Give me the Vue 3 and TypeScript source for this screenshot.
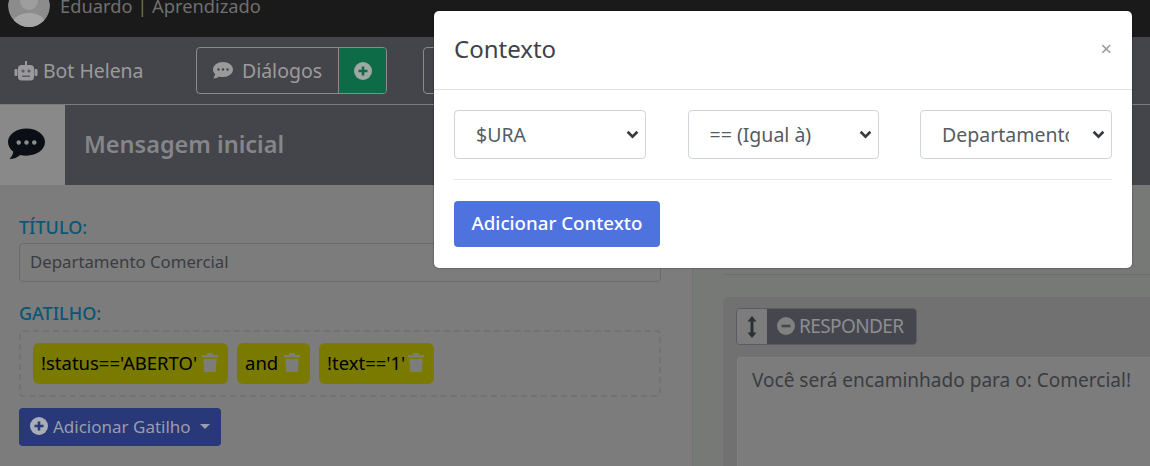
<template>
  <div class="page">
    <header class="topbar">
      <span class="avatar">
        <svg viewBox="0 0 42 42" width="42" height="42">
          <circle cx="21" cy="21" r="21" fill="#8c8c8c" />
          <circle cx="21" cy="16" r="9" fill="#9e9e9e" />
          <ellipse cx="21" cy="38" rx="16" ry="10" fill="#a6a6a6" />
        </svg>
      </span>
      <span class="user">Eduardo | Aprendizado</span>
    </header>

    <nav class="navbar">
      <span class="brand">
        <svg class="robot" viewBox="0 0 24 20" width="24" height="20">
          <rect x="0.5" y="8" width="3" height="7" rx="1" fill="#9a9a9a" />
          <rect x="20.5" y="8" width="3" height="7" rx="1" fill="#9a9a9a" />
          <rect x="4" y="4" width="16" height="15.5" rx="3.5" fill="#9a9a9a" />
          <rect x="11" y="0" width="2" height="4" fill="#9a9a9a" />
          <circle cx="9" cy="10" r="1.6" fill="#5a5b64" />
          <circle cx="15" cy="10" r="1.6" fill="#5a5b64" />
          <rect x="8" y="14.5" width="8" height="1.5" fill="#5a5b64" />
        </svg>
        Bot Helena
      </span>
      <div class="btn-group">
        <span class="btn-outline">
          <svg viewBox="0 0 20 17" width="20" height="17">
            <path d="M10 0C4.5 0 0 3.3 0 7.5c0 1.8.8 3.4 2.2 4.7C1.8 14 .6 15.6.4 16.4c2.4 0 4.3-1 5.5-2 1.2.4 2.6.6 4.1.6 5.5 0 10-3.4 10-7.5S15.5 0 10 0z" fill="#9a9a9a" />
            <circle cx="5.5" cy="7.5" r="1.2" fill="#44454b" />
            <circle cx="10" cy="7.5" r="1.2" fill="#44454b" />
            <circle cx="14.5" cy="7.5" r="1.2" fill="#44454b" />
          </svg>
          Diálogos
        </span>
        <span class="btn-add">
          <svg viewBox="0 0 18 18" width="18" height="18">
            <circle cx="9" cy="9" r="9" fill="#a0a8a3" />
            <path d="M9 4.5v9M4.5 9h9" stroke="#0e6b48" stroke-width="2.6" />
          </svg>
        </span>
      </div>
      <span class="btn-stub"></span>
    </nav>

    <section class="title-row">
      <div class="title-icon">
        <svg viewBox="0 0 38 32" width="37" height="32">
          <path d="M19 0C8.5 0 0 6.2 0 14c0 3.9 2.1 7.4 5.5 9.9C5 27 3 30 1.5 31.5c4.5 0 8.5-2 11-4.3 2 .5 4.2.8 6.5.8 10.5 0 19-6.2 19-14S29.5 0 19 0z" fill="#0b0e14" />
          <circle cx="11" cy="14.5" r="2.3" fill="#8d8d8d" />
          <circle cx="19" cy="14.5" r="2.3" fill="#8d8d8d" />
          <circle cx="27" cy="14.5" r="2.3" fill="#8d8d8d" />
        </svg>
      </div>
      <h2 class="title-bar">Mensagem inicial</h2>
    </section>

    <main class="content">
      <div class="left">
        <label class="label">TÍTULO:</label>
        <div class="input">Departamento Comercial</div>
        <label class="label gatilho">GATILHO:</label>
        <div class="triggers">
          <span v-for="t in triggers" :key="t.text" class="chip" :style="{ width: t.width + 'px' }">
            {{ t.text }}
            <svg viewBox="0 0 16 19" width="16" height="19">
              <path d="M5.5 0h5l1 2H16v2.4H0V2h4.5zM1.3 6h13.4l-1 13H2.3z" fill="#7c7c7c" />
            </svg>
          </span>
        </div>
        <span class="add-trigger">
          <svg viewBox="0 0 18 18" width="18" height="18">
            <circle cx="9" cy="9" r="9" fill="#a9adb8" />
            <path d="M9 4.5v9M4.5 9h9" stroke="#29397a" stroke-width="2.6" />
          </svg>
          Adicionar Gatilho
          <i class="caret"></i>
        </span>
      </div>

      <div class="right">
        <div class="right-line"></div>
        <div class="answer">
          <div class="answer-head">
            <span class="handle">
              <svg viewBox="0 0 10 22" width="10" height="22">
                <path d="M5 0l4.5 5.5H6.5v11h3L5 22 .5 16.5h3v-11h-3z" fill="#2d2f36" />
              </svg>
            </span>
            <span class="answer-tag">
              <svg viewBox="0 0 18 18" width="18" height="18">
                <circle cx="9" cy="9" r="9" fill="#7f8080" />
                <rect x="4.5" y="7.7" width="9" height="2.6" fill="#46474e" />
              </svg>
              RESPONDER
            </span>
          </div>
          <div class="answer-text">Você será encaminhado para o: Comercial!</div>
        </div>
      </div>
    </main>

    <div class="modal">
      <div class="modal-head">
        <h5>Contexto</h5>
        <span class="close">×</span>
      </div>
      <div class="modal-body">
        <div class="selects">
          <div v-for="s in selects" :key="s.label" class="select" :style="{ width: s.width + 'px' }">
            <span class="select-text">{{ s.label }}</span>
            <svg viewBox="0 0 12 8" width="13" height="9">
              <path d="M1.5 1.5L6 6l4.5-4.5" fill="none" stroke="#343a40" stroke-width="2.4" />
            </svg>
          </div>
        </div>
        <hr />
        <button class="primary" type="button">Adicionar Contexto</button>
      </div>
    </div>
  </div>
</template>

<script setup lang="ts">
const triggers: { text: string; width: number }[] = [
  { text: "!status=='ABERTO'", width: 195 },
  { text: 'and', width: 73 },
  { text: "!text=='1'", width: 115 },
]

const selects: { label: string; width: number }[] = [
  { label: '$URA', width: 192 },
  { label: '== (Igual à)', width: 191 },
  { label: 'Departamento', width: 192 },
]
</script>

<style>
html,
body {
  margin: 0;
  overflow: hidden;
}
</style>

<style scoped>
.page {
  position: relative;
  width: 1150px;
  height: 466px;
  overflow: hidden;
  background: #7c7c7c;
  font-family: "Noto Sans", "Open Sans", sans-serif;
  color: #3a3c42;
}

.topbar {
  height: 37px;
  background: #1a1a1a;
  display: flex;
  align-items: flex-end;
  gap: 10px;
  padding: 0 0 10px 8px;
  box-sizing: border-box;
  overflow: hidden;
}
.avatar {
  width: 42px;
  height: 42px;
  flex: none;
  border-radius: 50%;
  overflow: hidden;
}
.avatar svg {
  display: block;
}
.user {
  color: #6f6f6f;
  font-size: 18.3px;
  line-height: 30px;
  margin-bottom: 6px;
}

.navbar {
  height: 68px;
  background: #44454b;
  border-bottom: 1px solid #7c7c80;
  box-sizing: border-box;
  display: flex;
  align-items: center;
  padding: 0 0 0 14px;
}
.brand {
  display: flex;
  align-items: center;
  gap: 5px;
  width: 182px;
  font-size: 19.4px;
  color: #9b9b9b;
}
.btn-group {
  display: flex;
  height: 47px;
  border: 1px solid #8a8a8a;
  border-radius: 4px;
  box-sizing: border-box;
  overflow: hidden;
}
.btn-outline {
  width: 141px;
  display: flex;
  align-items: center;
  justify-content: center;
  gap: 9px;
  font-size: 19.5px;
  color: #9b9b9b;
}
.btn-add {
  width: 48px;
  background: #0e6b48;
  border-left: 1px solid #8a8a8a;
  box-sizing: border-box;
  display: flex;
  align-items: center;
  justify-content: center;
}
.btn-stub {
  width: 40px;
  height: 47px;
  margin-left: 36px;
  border: 1px solid #8a8a8a;
  border-radius: 4px;
  box-sizing: border-box;
}

.title-row {
  display: flex;
  height: 80px;
}
.title-icon {
  width: 65px;
  background: #898989;
  display: flex;
  align-items: center;
  padding: 0 0 2px 8px;
  box-sizing: border-box;
}
.title-bar {
  flex: 1;
  margin: 0;
  padding-left: 19px;
  background: #44454b;
  color: #85868a;
  font-size: 23.5px;
  font-weight: 600;
  line-height: 78px;
}

.content {
  display: flex;
}
.left {
  width: 693px;
  height: 281px;
  box-sizing: border-box;
  border-right: 1px solid #707474;
  padding: 30px 31px 0 19px;
  flex: none;
}
.label {
  display: block;
  color: #0c5675;
  font-size: 18px;
  font-weight: 500;
  line-height: 24px;
}
.input {
  height: 39px;
  margin-top: 4px;
  box-sizing: border-box;
  border: 1px solid #6b6b6b;
  border-radius: 4px;
  padding-left: 10px;
  font-size: 16.8px;
  line-height: 36px;
}
.gatilho {
  margin-top: 19px;
}
.triggers {
  display: flex;
  gap: 9px;
  height: 67px;
  margin-top: 5px;
  box-sizing: border-box;
  border: 2px dashed #727272;
  border-radius: 4px;
  padding: 11px 12px;
}
.chip {
  height: 41px;
  display: flex;
  align-items: center;
  justify-content: space-between;
  padding: 0 10px 3px 8px;
  box-sizing: border-box;
  background: #7a7a00;
  border-radius: 6px;
  font-size: 18.5px;
  color: #000;
}
.add-trigger {
  display: flex;
  align-items: center;
  gap: 5px;
  width: fit-content;
  height: 38px;
  margin-top: 11px;
  padding: 0 11px 2px;
  box-sizing: border-box;
  background: #283878;
  border-radius: 4px;
  color: #999eab;
  font-size: 17px;
}
.caret {
  width: 0;
  height: 0;
  margin-left: 4px;
  border-left: 5px solid transparent;
  border-right: 5px solid transparent;
  border-top: 5px solid #999eab;
}

.right {
  flex: 1;
  padding-left: 30px;
  background: #777977;
}
.right-line {
  height: 89px;
  border-bottom: 1px solid #6b6f6f;
}
.answer {
  margin-top: 22px;
  height: 180px;
  padding: 11px 0 0 13px;
  background: #717171;
  border-radius: 6px 0 0 0;
}
.answer-head {
  display: flex;
  width: 181px;
  height: 37px;
  border: 1px solid #5a5b62;
  border-radius: 4px;
  box-sizing: border-box;
  overflow: hidden;
}
.handle {
  width: 30px;
  background: #7c7c7c;
  display: flex;
  align-items: center;
  justify-content: center;
  flex: none;
}
.answer-tag {
  flex: 1;
  background: #46474e;
  display: flex;
  align-items: center;
  gap: 4px;
  padding: 0 0 2px 10px;
  color: #8d8e90;
  font-size: 19px;
  letter-spacing: -0.6px;
}
.answer-text {
  height: 120px;
  margin: 12px 0 0 1px;
  background: #7c7c7c;
  border-radius: 4px 0 0 0;
  border: 1px solid #828282;
  border-right: 0;
  padding: 10px 0 0 14px;
  font-size: 19.05px;
  line-height: 24px;
}

.modal {
  position: absolute;
  left: 434px;
  top: 11px;
  width: 698px;
  height: 257px;
  background: #fff;
  border-radius: 5px;
  box-shadow: 0 0 2px rgba(0, 0, 0, 0.5);
}
.modal-head {
  height: 79px;
  box-sizing: border-box;
  border-bottom: 1px solid #dee2e6;
  display: flex;
  align-items: center;
  justify-content: space-between;
  padding: 0 20px 3px;
}
.modal-head h5 {
  margin: 0;
  font-size: 24px;
  font-weight: 400;
  color: #3d4148;
}
.close {
  font-size: 20px;
  color: #9a9a9a;
}
.modal-body {
  padding: 20px 20px 0;
}
.selects {
  display: flex;
  justify-content: space-between;
}
.select {
  height: 49px;
  box-sizing: border-box;
  border: 1px solid #ced4da;
  border-radius: 4px;
  display: flex;
  align-items: center;
  justify-content: space-between;
  padding: 0 6px 0 21px;
  font-size: 19.5px;
  color: #565c63;
  overflow: hidden;
}
.select-text {
  max-width: 127px;
  overflow: hidden;
  white-space: nowrap;
}
hr {
  margin: 20px 0 21px;
  border: 0;
  border-top: 1px solid #e3e6ea;
}
.primary {
  display: block;
  width: 206px;
  height: 46px;
  border: 0;
  border-radius: 4px;
  background: #4e73df;
  color: #fff;
  font-family: inherit;
  font-size: 18.7px;
  font-weight: 500;
  padding: 0 0 3px;
}
</style>
